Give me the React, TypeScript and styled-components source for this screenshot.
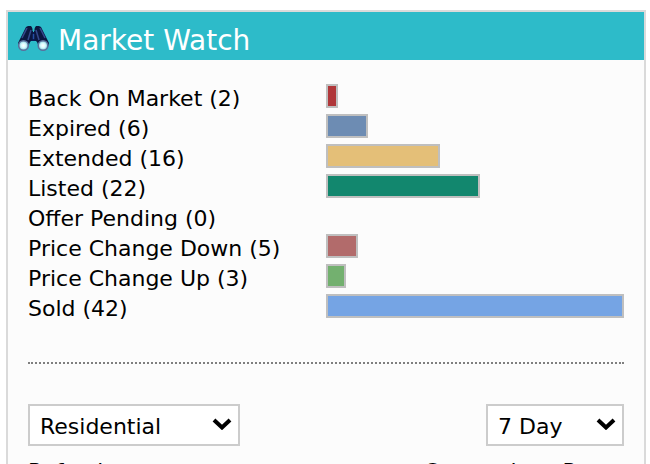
import React, { useId } from "react";
import styled, { createGlobalStyle } from "styled-components";

const GlobalStyle = createGlobalStyle`
  * { box-sizing: border-box; }
  html { height: 100%; overflow: hidden; }
  body {
    margin: 0;
    background: #fff;
    color: #000;
    font-family: Verdana, "DejaVu Sans", sans-serif;
    font-size: 22px;
    line-height: 30px;
  }
`;

const Card = styled.section`
  margin: 10px 4px 0 6px;
  border: 2px solid #dadada;
  background: #fcfcfc;
`;

const Header = styled.header`
  display: flex;
  align-items: center;
  gap: 8px;
  height: 48px;
  padding: 4px 10px 0;
  background: #2dbbc9;
  color: #fff;
`;

const Title = styled.h2`
  margin: 0;
  padding-top: 6px;
  font-size: 28px;
  font-weight: 400;
  line-height: 40px;
`;

const Body = styled.div`
  padding: 24px 20px;
`;

const Stats = styled.ul`
  margin: 0;
  padding: 0;
  list-style: none;
`;

const StatRow = styled.li`
  display: grid;
  grid-template-columns: 1fr 1fr;
  height: 30px;
`;

const StatLabel = styled.span`
  white-space: nowrap;
`;

const Bar = styled.div<{ $color: string }>`
  height: 24px;
  border: 2px solid #bfbfbf;
  background: ${(p) => p.$color};
`;

const Divider = styled.hr`
  margin: 38px 0 40px;
  border: 0;
  border-top: 2px dotted #7f7f7f;
`;

const Filters = styled.div`
  display: flex;
  justify-content: space-between;
`;

const SelectBox = styled.div<{ $width: number }>`
  display: grid;
  align-items: center;
  width: ${(p) => p.$width}px;
  height: 42px;
  border: 2px solid #ccc;
  background: #fff;

  > * { grid-area: 1 / 1; }
  > svg { justify-self: end; margin: 0 6px 2px 0; pointer-events: none; }
`;

const Select = styled.select`
  appearance: none;
  width: 100%;
  height: 100%;
  padding: 4px 30px 0 10px;
  border: 0;
  background: transparent;
  color: #000;
  font: inherit;
`;

const Links = styled.nav`
  display: flex;
  justify-content: space-between;
  margin-top: 11px;
`;

const CardLink = styled.a`
  color: #000;
  text-decoration: none;
`;

function Binoculars() {
  const id = useId();
  return (
    <svg width="32" height="28" viewBox="0 0 32 28" aria-hidden="true">
      <defs>
        <radialGradient id={id} cx="50%" cy="50%" r="50%">
          <stop offset="0" stopColor="#fff" />
          <stop offset="0.5" stopColor="#d5fbff" />
          <stop offset="1" stopColor="#7cc4d4" />
        </radialGradient>
      </defs>
      <path d="M12 8h7v9h-7z" fill="#0a1c58" />
      <path d="M8 3l2-1h3l2 3v10l-3 3-2 5H1l-1-4 4-8z" fill="#0b1740" />
      <path d="M23 3l-2-1h-3l-2 3v10l3 3 2 5h9l1-4-4-8z" fill="#0b1740" />
      <path d="M9 4L4 14M13 6l-3 10M22 4l5 10M18 6l3 10" stroke="#34498c" strokeWidth="1.5" fill="none" />
      <path d="M15.5 2v5" stroke="#2dbbc9" strokeWidth="2" />
      <path d="M15.5 10v5" stroke="#244fa5" strokeWidth="1.5" />
      <circle cx="5.5" cy="21.5" r="4.8" fill={`url(#${id})`} stroke="#5a6f9c" strokeWidth="1.5" />
      <circle cx="25" cy="21.5" r="4.8" fill={`url(#${id})`} stroke="#5a6f9c" strokeWidth="1.5" />
    </svg>
  );
}

function Chevron() {
  return (
    <svg width="20" height="12" viewBox="0 0 20 12" aria-hidden="true">
      <path d="M2 2l8 7.5L18 2" fill="none" stroke="#000" strokeWidth="4" />
    </svg>
  );
}

const stats = [
  { label: "Back On Market", count: 2, share: 4, color: "#b0373a" },
  { label: "Expired", count: 6, share: 14, color: "#6d8cb3" },
  { label: "Extended", count: 16, share: 38.2, color: "#e4bf78" },
  { label: "Listed", count: 22, share: 51.7, color: "#12876e" },
  { label: "Offer Pending", count: 0, share: 0, color: "transparent" },
  { label: "Price Change Down", count: 5, share: 10.8, color: "#b26b6b" },
  { label: "Price Change Up", count: 3, share: 6.7, color: "#73b06f" },
  { label: "Sold", count: 42, share: 100, color: "#75a4e4" },
];

export default function App() {
  return (
    <>
      <GlobalStyle />
      <Card>
        <Header>
          <Binoculars />
          <Title>Market Watch</Title>
        </Header>
        <Body>
          <Stats>
            {stats.map((s) => (
              <StatRow key={s.label}>
                <StatLabel>{s.label} ({s.count})</StatLabel>
                {s.count > 0 && <Bar $color={s.color} style={{ width: `${s.share}%` }} />}
              </StatRow>
            ))}
          </Stats>
          <Divider />
          <Filters>
            <SelectBox $width={212}>
              <Select aria-label="Property type">
                <option>Residential</option>
              </Select>
              <Chevron />
            </SelectBox>
            <SelectBox $width={138}>
              <Select aria-label="Period">
                <option>7 Day</option>
              </Select>
              <Chevron />
            </SelectBox>
          </Filters>
          <Links>
            <CardLink href="#refresh">Refresh</CardLink>
            <CardLink href="#comparison">Comparison Reset</CardLink>
          </Links>
        </Body>
      </Card>
    </>
  );
}
